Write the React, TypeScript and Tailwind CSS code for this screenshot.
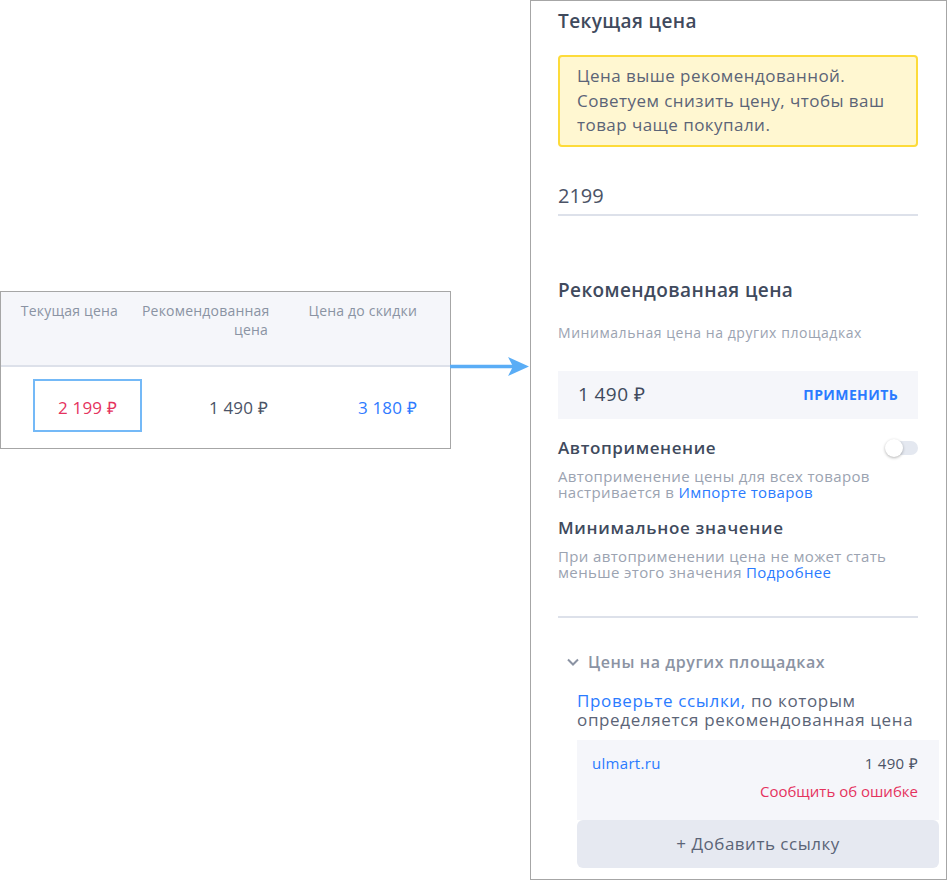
import React, { useState } from 'react';

function Table() {
  return (
    <div className="w-[451px] border border-[#a6a6a6] bg-white">
      <div className="flex h-[75px] border-b-2 border-[#dde1ea] bg-[#f5f6fa] pt-[9px] text-[14px] leading-[19px] tracking-[0.2px] text-[#8a93a3]">
        <div className="w-[141px] pr-[24px] text-right">Текущая цена</div>
        <div className="w-[150px] pr-[24px] text-right">Рекомендованная<br />цена</div>
        <div className="w-[149px] pr-[24px] text-right">Цена до скидки</div>
      </div>
      <div className="flex h-[81px] items-start pt-[12px] text-[17px] tracking-[0.2px]">
        <div className="flex w-[141px] justify-end">
          <div className="flex h-[53px] w-[109px] items-center justify-center border-2 border-[#74b9f7] pt-[5px] text-[#e5335e]">
            2 199 ₽
          </div>
        </div>
        <div className="flex h-[53px] w-[150px] items-center justify-end pr-[24px] pt-[5px] text-[#4b5366]">1 490 ₽</div>
        <div className="flex h-[53px] w-[149px] items-center justify-end pr-[24px] pt-[5px] text-[#2f7bff]">3 180 ₽</div>
      </div>
    </div>
  );
}

function Arrow() {
  return (
    <svg width="80" height="24" viewBox="0 0 80 24" className="mt-[355px] -ml-[1px] shrink-0">
      <line x1="0" y1="11.5" x2="64" y2="11.5" stroke="#5aadf6" strokeWidth="3.5" />
      <path d="M58 2 L79 11.5 L58 21 L63 11.5 Z" fill="#5aadf6" />
    </svg>
  );
}

function Toggle() {
  const [on, setOn] = useState(false);
  return (
    <button
      onClick={() => setOn(!on)}
      className="relative mt-[4px] h-[14px] w-[32px] rounded-full bg-[#e4e8f0]"
    >
      <span
        className={
          on
            ? 'absolute -top-[2px] left-[14px] h-[18px] w-[18px] rounded-full bg-white shadow-[0_1px_3px_rgba(0,0,0,0.3)]'
            : 'absolute -top-[2px] -left-[1px] h-[18px] w-[18px] rounded-full bg-white shadow-[0_1px_3px_rgba(0,0,0,0.3)]'
        }
      />
    </button>
  );
}

function PricePanel() {
  return (
    <div className="h-[880px] w-[417px] shrink-0 border border-[#a6a6a6] bg-white">
      <div className="flex flex-col pl-[27px] pr-[28px]">
        <h2 className="mt-[7px] text-[19px] font-semibold leading-[26px] tracking-[0.4px] text-[#404a5d]">Текущая цена</h2>

        <div className="mt-[21px] rounded-[4px] border-2 border-[#fddb3a] bg-[#fff7d1] px-[17px] py-[7px] text-[17px] leading-[24.5px] tracking-[0.45px] text-[#5b6477]">
          Цена выше рекомендованной.<br />
          Советуем снизить цену, чтобы ваш<br />
          товар чаще покупали.
        </div>

        <div className="mt-[36px] border-b-2 border-[#dde1ea] pb-[5px] text-[20px] leading-[26px] text-[#4b5366]">2199</div>

        <h2 className="mt-[61px] text-[19px] font-semibold leading-[26px] tracking-[0.4px] text-[#404a5d]">Рекомендованная цена</h2>
        <p className="mt-[21px] text-[14px] leading-[18px] tracking-[0.55px] text-[#9ba3b1]">Минимальная цена на других площадках</p>

        <div className="mt-[29px] flex h-[48px] items-center justify-between bg-[#f5f6fa] pl-[20px] pr-[20px]">
          <span className="text-[19px] tracking-[0.4px] text-[#404a5d]">1 490 ₽</span>
          <span className="text-[14px] font-bold tracking-[0.4px] text-[#2a7bff]">ПРИМЕНИТЬ</span>
        </div>

        <div className="mt-[18px] flex items-start justify-between">
          <span className="text-[17px] font-semibold leading-[22px] tracking-[0.6px] text-[#404a5d]">Автоприменение</span>
          <Toggle />
        </div>
        <p className="mt-[9px] text-[15px] leading-[16px] tracking-[0.36px] text-[#9ba3b1]">
          Автоприменение цены для всех товаров<br />
          настривается в <span className="text-[#2a7bff]">Импорте товаров</span>
        </p>

        <div className="mt-[17px] text-[17px] font-semibold leading-[22px] tracking-[0.7px] text-[#404a5d]">Минимальное значение</div>
        <p className="mt-[9px] text-[15px] leading-[16px] tracking-[0.36px] text-[#9ba3b1]">
          При автоприменении цена не может стать<br />
          меньше этого значения <span className="text-[#2a7bff]">Подробнее</span>
        </p>

        <div className="mt-[36px] h-[2px] bg-[#dde1ea]" />

        <div className="mt-[33px] flex items-center gap-[8px] pl-[8px] text-[16px] font-semibold leading-[22px] tracking-[0.58px] text-[#8b93a3]">
          <svg width="14" height="14" viewBox="0 0 14 14" fill="none">
            <path d="M2 4.5 L7 9.5 L12 4.5" stroke="#8b93a3" strokeWidth="2" />
          </svg>
          Цены на других площадках
        </div>
      </div>

      <div className="ml-[46px] mr-[7px] mt-[18px]">
        <p className="pr-[10px] text-[17px] leading-[19px] tracking-[0.65px] text-[#5b6477]">
          <span className="text-[#2a7bff]">Проверьте ссылки,</span> по которым<br />
          определяется рекомендованная цена
        </p>
        <div className="mt-[11px] h-[80px] bg-[#f5f6fa] pl-[15px] pr-[21px] pt-[13px] text-[15px] leading-[20px] tracking-[0.3px]">
          <div className="flex justify-between">
            <span className="text-[#2a7bff]">ulmart.ru</span>
            <span className="text-[#4b5366]">1 490 ₽</span>
          </div>
          <div className="mt-[8px] text-right tracking-[0px] text-[#e5335e]">Сообщить об ошибке</div>
        </div>
        <button className="flex h-[48px] w-full items-center justify-center rounded-[6px] bg-[#e6e9f1] text-[17px] tracking-[0.5px] text-[#5b6477]">
          + Добавить ссылку
        </button>
      </div>
    </div>
  );
}

export default function App() {
  return (
    <div className="flex h-[881px] w-[949px] items-start bg-white font-['Open_Sans',sans-serif]">
      <div className="mt-[291px] shrink-0">
        <Table />
      </div>
      <Arrow />
      <PricePanel />
    </div>
  );
}
